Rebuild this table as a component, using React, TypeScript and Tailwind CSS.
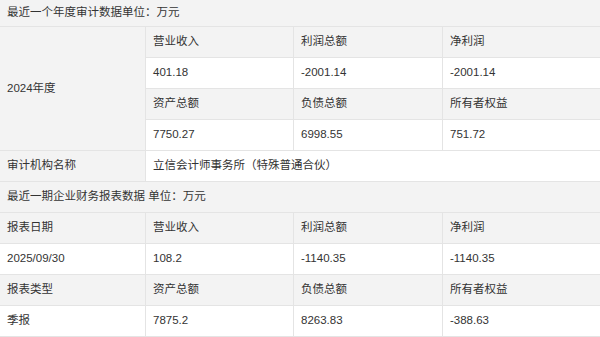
import React from "react";

const font = { fontFamily: '"Liberation Sans", "Noto Sans CJK SC", sans-serif' };

function Cell({ children, gray, className = "" }: { children?: React.ReactNode; gray?: boolean; className?: string }) {
  return (
    <div
      className={`flex items-center pl-[7px] text-[11.5px] text-[#333333] whitespace-nowrap ${gray ? "bg-[#f3f3f3]" : "bg-white"} ${className}`}
    >
      {children}
    </div>
  );
}

export default function App() {
  return (
    <div className="w-[600px] h-[337px] bg-white overflow-hidden" style={font}>
      <div className="grid grid-cols-[145px_147px_148px_1fr] grid-rows-[26px_repeat(10,30px)] gap-px bg-[#e4e4e4] border-b border-[#e4e4e4]">
        <Cell gray className="col-span-4 pl-[6px]">最近一个年度审计数据单位：万元</Cell>

        <Cell gray className="row-span-4 pl-[6px]">2024年度</Cell>
        <Cell gray>营业收入</Cell>
        <Cell gray>利润总额</Cell>
        <Cell gray>净利润</Cell>

        <Cell>401.18</Cell>
        <Cell>-2001.14</Cell>
        <Cell>-2001.14</Cell>

        <Cell gray>资产总额</Cell>
        <Cell gray>负债总额</Cell>
        <Cell gray>所有者权益</Cell>

        <Cell>7750.27</Cell>
        <Cell>6998.55</Cell>
        <Cell>751.72</Cell>

        <Cell gray className="pl-[6px]">审计机构名称</Cell>
        <Cell className="col-span-3">立信会计师事务所（特殊普通合伙）</Cell>

        <Cell gray className="col-span-4 pl-[6px]">最近一期企业财务报表数据 单位：万元</Cell>

        <Cell gray className="pl-[6px]">报表日期</Cell>
        <Cell gray>营业收入</Cell>
        <Cell gray>利润总额</Cell>
        <Cell gray>净利润</Cell>

        <Cell className="pl-[6px]">2025/09/30</Cell>
        <Cell>108.2</Cell>
        <Cell>-1140.35</Cell>
        <Cell>-1140.35</Cell>

        <Cell gray className="pl-[6px]">报表类型</Cell>
        <Cell gray>资产总额</Cell>
        <Cell gray>负债总额</Cell>
        <Cell gray>所有者权益</Cell>

        <Cell className="pl-[6px]">季报</Cell>
        <Cell>7875.2</Cell>
        <Cell>8263.83</Cell>
        <Cell>-388.63</Cell>
      </div>
    </div>
  );
}
